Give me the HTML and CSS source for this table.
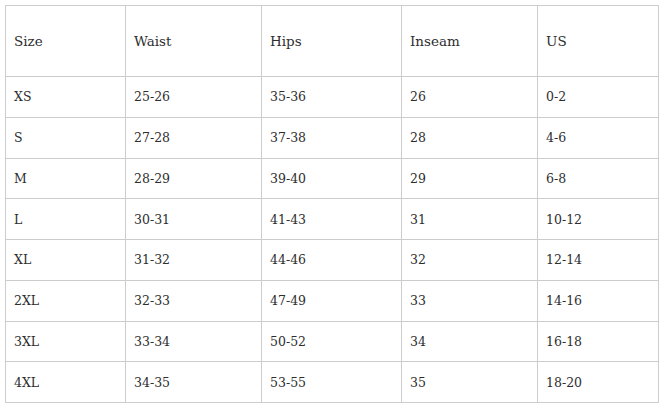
FILE: index.html
```html
<!DOCTYPE html>
<html>
<head>
<meta charset="utf-8">
<link rel="stylesheet" href="styles.css">
</head>
<body>
<table class="size-table">
  <colgroup>
    <col class="c1"><col class="c2"><col class="c3"><col class="c4"><col class="c5">
  </colgroup>
  <thead>
    <tr class="head"><th>Size</th><th>Waist</th><th>Hips</th><th>Inseam</th><th>US</th></tr>
  </thead>
  <tbody>
    <tr><td>XS</td><td>25-26</td><td>35-36</td><td>26</td><td>0-2</td></tr>
    <tr><td>S</td><td>27-28</td><td>37-38</td><td>28</td><td>4-6</td></tr>
    <tr><td>M</td><td>28-29</td><td>39-40</td><td>29</td><td>6-8</td></tr>
    <tr><td>L</td><td>30-31</td><td>41-43</td><td>31</td><td>10-12</td></tr>
    <tr><td>XL</td><td>31-32</td><td>44-46</td><td>32</td><td>12-14</td></tr>
    <tr><td>2XL</td><td>32-33</td><td>47-49</td><td>33</td><td>14-16</td></tr>
    <tr><td>3XL</td><td>33-34</td><td>50-52</td><td>34</td><td>16-18</td></tr>
    <tr><td>4XL</td><td>34-35</td><td>53-55</td><td>35</td><td>18-20</td></tr>
  </tbody>
</table>
</body>
</html>
```

FILE: styles.css
```css
html, body {
  margin: 0;
  padding: 0;
  background: #ffffff;
}
body {
  padding: 5px 0 0 5px;
}
.size-table {
  border-collapse: collapse;
  table-layout: fixed;
  width: 653px;
  font-family: "DejaVu Serif", "Liberation Serif", serif;
  font-size: 13.5px;
  color: #2e2e2e;
}
.c1 { width: 120px; }
.c2 { width: 136px; }
.c3 { width: 140px; }
.c4 { width: 136px; }
.c5 { width: 121px; }
.size-table th,
.size-table td {
  border: 1px solid #cccccc;
  padding: 0 0 0 8px;
  text-align: left;
  vertical-align: middle;
  font-weight: normal;
  height: 39.75px;
}
.size-table td {
  font-size: 12.5px;
}
.size-table .head th {
  height: 70px;
}
```
